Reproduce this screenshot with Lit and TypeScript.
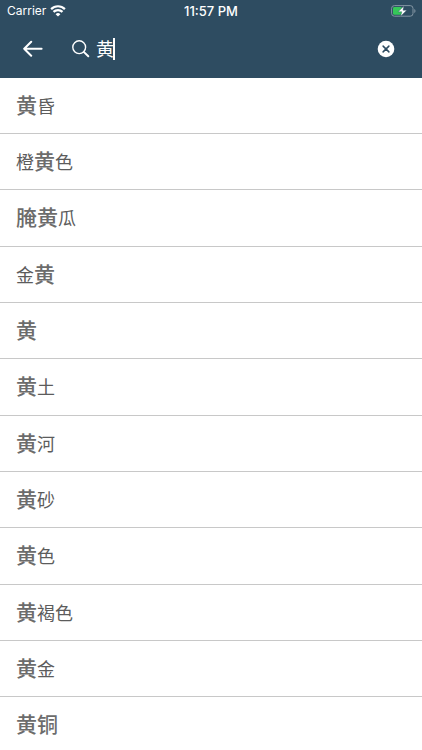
import { LitElement, html, css } from "lit";
import { customElement, property, state } from "lit/decorators.js";

interface Run {
  text: string;
  strong: boolean;
}

const STRONG = "黄腌铜";

const WORDS = [
  "黄昏", "橙黄色", "腌黄瓜", "金黄", "黄", "黄土",
  "黄河", "黄砂", "黄色", "黄褐色", "黄金", "黄铜",
];

function toRuns(word: string): Run[] {
  const runs: Run[] = [];
  for (const text of word) {
    const strong = STRONG.includes(text);
    const last = runs[runs.length - 1];
    if (last && last.strong === strong) last.text += text;
    else runs.push({ text, strong });
  }
  return runs;
}

@customElement("status-bar")
class StatusBar extends LitElement {
  static styles = css`
    :host {
      display: grid;
      grid-template-columns: 1fr auto 1fr;
      align-items: center;
      height: 20px;
      padding: 1px 6px 0 6px;
      box-sizing: border-box;
      color: #fff;
      font: 12px/20px Inter, "Liberation Sans", sans-serif;
    }
    .carrier { display: flex; align-items: center; gap: 4px; padding-left: 1px; }
    .time { font-size: 13px; font-weight: 500; }
    .battery { justify-self: end; }
    svg { display: block; }
  `;
  render() {
    return html`
      <div class="carrier">
        <span>Carrier</span>
        <svg width="16" height="12" viewBox="0 0 16 12" fill="none" stroke="#fff" stroke-width="2.2">
          <path d="M1.1 4.1a9.8 9.8 0 0 1 13.8 0M3.5 6.9a6.4 6.4 0 0 1 9 0" />
          <path d="M8 11.6 5.6 9.2a3.4 3.4 0 0 1 4.8 0Z" fill="#fff" stroke="none" />
        </svg>
      </div>
      <span class="time">11:57 PM</span>
      <svg class="battery" width="25" height="12" viewBox="0 0 25 12">
        <rect x=".6" y=".6" width="21.4" height="10.6" rx="2.8" fill="none" stroke="#8496a4" />
        <rect x="2" y="2" width="9" height="7.8" rx="1.4" fill="#35c759" />
        <path d="M23.3 4v4c1.6-.6 1.6-3.4 0-4Z" fill="#8496a4" />
        <path d="M12.9 1 7.1 6.8h3.7l-1.1 4.5 6-6.1h-3.7Z" fill="#fff" stroke="#2e4c61" stroke-width=".4" />
      </svg>
    `;
  }
}

@customElement("search-bar")
class SearchBar extends LitElement {
  @property() value = "";
  static styles = css`
    :host { display: block; }
    .bar {
      display: flex;
      align-items: center;
      height: 58px;
      padding: 0 27px 0 23px;
      box-sizing: border-box;
      color: #fff;
    }
    button {
      flex: none;
      display: block;
      padding: 0;
      border: 0;
      background: none;
      color: inherit;
      cursor: pointer;
    }
    svg { display: block; }
    .field {
      flex: 1;
      display: flex;
      align-items: center;
      min-width: 0;
      margin-left: 29px;
    }
    input {
      field-sizing: content;
      min-width: 1px;
      max-width: 100%;
      height: 28px;
      box-sizing: border-box;
      margin-left: 6px;
      padding: 0 0 2px;
      border: 0;
      outline: 0;
      background: none;
      color: inherit;
      caret-color: transparent;
      font: 18px/26px "Noto Sans CJK SC", sans-serif;
    }
    .caret { flex: none; width: 2px; height: 22px; margin-left: -1px; background: #fff; }
  `;
  private clear() {
    this.dispatchEvent(new CustomEvent("query", { detail: "" }));
  }
  private typed(e: Event) {
    this.dispatchEvent(new CustomEvent("query", { detail: (e.target as HTMLInputElement).value }));
  }
  render() {
    return html`
      <div class="bar" role="search">
        <button aria-label="Back">
          <svg width="20" height="18" viewBox="0 0 20 18" fill="none" stroke="currentColor" stroke-width="2" stroke-linecap="round" stroke-linejoin="round">
            <path d="M18.6 8.8H1.4M8.2 1.8l-7 7 7 7" />
          </svg>
        </button>
        <label class="field">
          <svg width="18" height="18" viewBox="0 0 18 18" fill="none" stroke="currentColor" stroke-linecap="round" aria-label="Search">
            <circle cx="7.2" cy="7.2" r="6.4" stroke-width="1.4" />
            <path d="m12 12.1 4.3 4.1" stroke-width="2" />
          </svg>
          <input type="text" aria-label="Search" .value=${this.value} @input=${this.typed} />
          <span class="caret"></span>
        </label>
        <button aria-label="Clear" @click=${this.clear}>
          <svg width="18" height="18" viewBox="0 0 18 18">
            <circle cx="9" cy="9" r="8.3" fill="#fff" />
            <path d="m6.1 6.1 5.8 5.8m0-5.8-5.8 5.8" stroke="#2e4c61" stroke-width="1.5" stroke-linecap="round" />
          </svg>
        </button>
      </div>
    `;
  }
}

@customElement("app-root")
class AppRoot extends LitElement {
  @state() private query = "黄";
  static styles = css`
    :host {
      display: block;
      height: 100vh;
      overflow: hidden;
      background: #fff;
    }
    header { background: #2e4c61; }
    ul { margin: 0; padding: 0; list-style: none; }
    li {
      display: flex;
      height: 56px;
      box-sizing: border-box;
      border-bottom: 1px solid #c8c8c8;
    }
    /* Rows are a third of 169px; the spare pixel goes to every third one. */
    li:nth-child(3n) { height: 57px; }
    a {
      flex: 1;
      padding: 0 16px;
      color: #5c5c5c;
      text-decoration: none;
      font: 18px/52px "Noto Sans CJK SC", sans-serif;
      white-space: nowrap;
    }
    .strong { color: #6c6c6c; font-size: 21px; font-weight: 500; }
  `;
  render() {
    return html`
      <header>
        <status-bar></status-bar>
        <search-bar .value=${this.query} @query=${(e: CustomEvent) => (this.query = e.detail)}></search-bar>
      </header>
      <ul>
        ${WORDS.filter((w) => w.includes(this.query)).map(
          (w) => html`<li><a href="#">${toRuns(w).map((r) => html`<span class=${r.strong ? "strong" : "plain"}>${r.text}</span>`)}</a></li>`
        )}
      </ul>
    `;
  }
}
